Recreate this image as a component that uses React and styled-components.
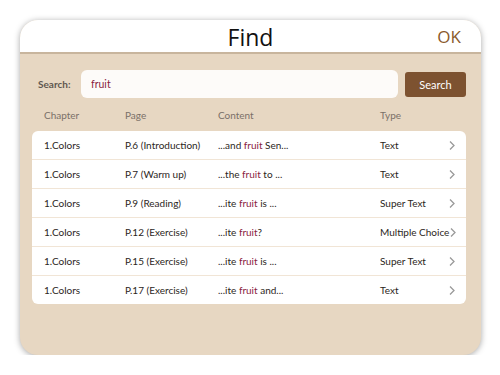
import React, { useState } from 'react';
import styled, { createGlobalStyle } from 'styled-components';

const GlobalStyle = createGlobalStyle`
  body {
    margin: 0;
    background: #ffffff;
    font-family: Lato, "Noto Sans", sans-serif;
  }
`;

const Dialog = styled.div`
  margin: 20px 0 0 20px;
  width: 461px;
  height: 335px;
  border-radius: 18px;
  background: #e7d7c2;
  box-shadow: 0 1px 6px rgba(0, 0, 0, 0.35);
  overflow: hidden;
  display: flex;
  flex-direction: column;
`;

const Header = styled.div`
  height: 32px;
  background: #ffffff;
  border-bottom: 2px solid #c8b59d;
  display: grid;
  grid-template-columns: 1fr auto 1fr;
  align-items: center;
`;

const Title = styled.div`
  grid-column: 2;
  font-family: "Open Sans", "Noto Sans", sans-serif;
  font-size: 23px;
  color: #111;
  line-height: 1;
  padding-top: 3px;
`;

const OkButton = styled.button`
  justify-self: end;
  margin-right: 20px;
  border: none;
  background: none;
  padding: 0;
  font-family: "Open Sans", "Noto Sans", sans-serif;
  font-size: 17px;
  color: #8a5a2b;
  cursor: pointer;
`;

const Body = styled.div`
  padding: 16px 15px 0 12px;
  display: flex;
  flex-direction: column;
`;

const SearchRow = styled.div`
  display: flex;
  align-items: center;
  padding-left: 6px;
`;

const Label = styled.label`
  font-size: 10px;
  font-weight: 700;
  color: #5f5750;
  width: 43px;
`;

const Input = styled.input`
  flex: 1;
  height: 28px;
  box-sizing: border-box;
  border: none;
  border-radius: 6px;
  background: #fdfbf9;
  padding: 0 10px;
  font-family: Lato, "Noto Sans", sans-serif;
  font-size: 10.5px;
  color: #8b1d3f;
  outline: none;
`;

const SearchButton = styled.button`
  margin-left: 7px;
  width: 61px;
  height: 25px;
  border: none;
  border-radius: 3px;
  background: #7d5230;
  color: #fff;
  font-family: Lato, "Noto Sans", sans-serif;
  font-size: 11px;
  font-weight: 400;
`;

const Columns = `
  display: grid;
  grid-template-columns: 81px 93px 162px 1fr 12px;
  align-items: center;
  padding: 0 6px 0 12px;
`;

const HeadRow = styled.div`
  ${Columns}
  height: 33px;
  font-size: 10px;
  color: #7a7068;
`;

const Card = styled.div`
  background: #ffffff;
  border-radius: 6px;
  overflow: hidden;
`;

const Row = styled.div`
  ${Columns}
  height: 28px;
  font-size: 10px;
  color: #2c2622;
  border-bottom: 1px solid #f1e5d6;
  &:last-child {
    border-bottom: none;
  }
`;

const Cell = styled.span`
  white-space: nowrap;
`;

const Hit = styled.span`
  color: #8b1d3f;
`;

const results = [
  { chapter: '1.Colors', page: 'P.6 (Introduction)', pre: '...and ', post: ' Sen...', type: 'Text' },
  { chapter: '1.Colors', page: 'P.7 (Warm up)', pre: '...the ', post: ' to ...', type: 'Text' },
  { chapter: '1.Colors', page: 'P.9 (Reading)', pre: '...ite ', post: ' is ...', type: 'Super Text' },
  { chapter: '1.Colors', page: 'P.12 (Exercise)', pre: '...ite ', post: '?', type: 'Multiple Choice' },
  { chapter: '1.Colors', page: 'P.15 (Exercise)', pre: '...ite ', post: ' is ...', type: 'Super Text' },
  { chapter: '1.Colors', page: 'P.17 (Exercise)', pre: '...ite ', post: ' and...', type: 'Text' },
];

const Chevron = () => (
  <svg width="8" height="11" viewBox="0 0 8 11">
    <polyline points="2,1.5 6,5.5 2,9.5" fill="none" stroke="#999" strokeWidth="1.3" />
  </svg>
);

function App() {
  const [query, setQuery] = useState('fruit');

  return (
    <>
      <GlobalStyle />
      <Dialog>
        <Header>
          <Title>Find</Title>
          <OkButton>OK</OkButton>
        </Header>
        <Body>
          <SearchRow>
            <Label>Search:</Label>
            <Input value={query} onChange={e => setQuery(e.target.value)} />
            <SearchButton>Search</SearchButton>
          </SearchRow>
          <HeadRow>
            <Cell>Chapter</Cell>
            <Cell>Page</Cell>
            <Cell>Content</Cell>
            <Cell>Type</Cell>
          </HeadRow>
          <Card>
            {results.map(r => (
              <Row key={r.page}>
                <Cell>{r.chapter}</Cell>
                <Cell>{r.page}</Cell>
                <Cell>
                  {r.pre}
                  <Hit>fruit</Hit>
                  {r.post}
                </Cell>
                <Cell>{r.type}</Cell>
                <Chevron />
              </Row>
            ))}
          </Card>
        </Body>
      </Dialog>
    </>
  );
}

export default App;
